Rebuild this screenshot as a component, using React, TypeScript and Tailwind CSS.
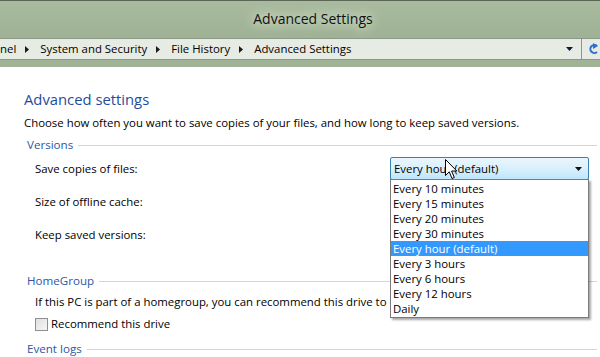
import React from "react";

const intervals = [
  "Every 10 minutes",
  "Every 15 minutes",
  "Every 20 minutes",
  "Every 30 minutes",
  "Every hour (default)",
  "Every 3 hours",
  "Every 6 hours",
  "Every 12 hours",
  "Daily",
];

const crumbs = ["nel", "System and Security", "File History", "Advanced Settings"];

const Chevron = () => (
  <svg width="4" height="7" viewBox="0 0 4 7" className="ml-[9px] mr-[11px] shrink-0">
    <path d="M0 0 L4 3.5 L0 7 Z" fill="#1a1a1a" />
  </svg>
);

const GroupLabel = ({ label }: { label: string }) => (
  <div className="flex items-center h-4 pl-[27px]">
    <span className="text-[#2d57a5] text-[11.6px] leading-4 pr-[5px]">{label}</span>
    <div className="flex-1 h-px bg-[#d6d6d6] mr-[3px]" />
  </div>
);

const Cursor = () => (
  <svg width="13" height="21" viewBox="0 0 13 21" className="absolute left-[445px] top-[159px]">
    <path
      d="M0.5 0.5 L0.5 16.5 L4.3 12.8 L7 19.5 L9.3 18.5 L6.6 12 L11.8 12 Z"
      fill="#fff"
      stroke="#000"
      strokeWidth="1"
      strokeLinejoin="round"
    />
  </svg>
);

export default function App() {
  return (
    <div className="relative w-[600px] h-[357px] overflow-hidden bg-white text-black font-['Open_Sans','Noto_Sans',sans-serif]">
      {/* title bar */}
      <div className="h-[36px] border-t border-[#5b6656] bg-gradient-to-b from-[#a9bb9f] to-[#9fb295] flex items-center justify-center">
        <span className="text-[14px] text-[#111] pl-[26px] [text-shadow:0_0_8px_#dfe9d8,0_0_14px_#dfe9d8]">
          Advanced Settings
        </span>
      </div>

      {/* address bar */}
      <div className="bg-[#a0b396] pt-[2px] pb-[7px]">
        <div className="h-[22px] bg-[#e6ebe3] border-y border-[#8b9886] flex items-center text-[11.4px]">
          {crumbs.map((c, i) => (
            <React.Fragment key={c}>
              {i > 0 && <Chevron />}
              <span>{c}</span>
            </React.Fragment>
          ))}
          <div className="flex-1" />
          <svg width="7" height="4" viewBox="0 0 7 4" className="mr-[8px]">
            <path d="M0 0 H7 L3.5 4 Z" fill="#0d1a45" />
          </svg>
          <div className="w-px h-full bg-[#8b9886]" />
          <svg width="12" height="12" viewBox="0 0 12 12" className="ml-[6px] shrink-0">
            <path d="M9 3 A4 4 0 1 0 9 9" stroke="#2f6fd0" strokeWidth="2" fill="none" />
            <path d="M5 0 L10 3 L5 6 Z" fill="#2f6fd0" />
          </svg>
        </div>
      </div>

      {/* content */}
      <div className="pt-[22px]">
        <h1 className="pl-[24px] h-5 leading-5 text-[14.8px] text-[#1f4d9c] font-normal">Advanced settings</h1>
        <p className="pl-[24px] mt-[6px] h-4 leading-4 text-[11.4px]">
          Choose how often you want to save copies of your files, and how long to keep saved versions.
        </p>

        <div className="mt-[6px]">
          <GroupLabel label="Versions" />
        </div>

        <div className="mt-[4px] h-[23px] flex items-center text-[11.4px]">
          <span className="pl-[35px] w-[390px]">Save copies of files:</span>
          <div className="w-[199px] h-[23px] border border-[#3c7fb1] rounded-[2px] bg-gradient-to-b from-[#eaf6fd] via-[#d9f0fc] to-[#bee6fd] flex items-center pl-[3px] pr-[6px]">
            <span className="flex-1">Every hour (default)</span>
            <svg width="7" height="4" viewBox="0 0 7 4">
              <path d="M0 0 H7 L3.5 4 Z" fill="#111" />
            </svg>
          </div>
        </div>

        <div className="mt-[14px] h-4 leading-4 pl-[35px] text-[11.4px]">Size of offline cache:</div>
        <div className="mt-[17px] h-4 leading-4 pl-[35px] text-[11.4px]">Keep saved versions:</div>

        <div className="mt-[30px]">
          <GroupLabel label="HomeGroup" />
        </div>
        <div className="mt-[5px] h-4 leading-4 pl-[35px] w-[390px] overflow-hidden text-[11.4px] whitespace-nowrap">
          If this PC is part of a homegroup, you can recommend this drive to other homegroup members.
        </div>
        <div className="mt-[6px] h-4 flex items-center pl-[35px] text-[11.4px]">
          <div className="w-[13px] h-[13px] border border-[#8e8f8f] bg-gradient-to-br from-[#e0e0e0] to-[#f6f6f6] mr-[3px]" />
          <span>Recommend this drive</span>
        </div>
        <div className="mt-[9px]">
          <GroupLabel label="Event logs" />
        </div>
      </div>

      {/* open list */}
      <div className="absolute left-[390px] top-[179px] w-[199px] bg-white border border-[#7a7a7a] shadow-[2px_2px_2px_rgba(0,0,0,0.35)] py-[1px] text-[11.4px]">
        {intervals.map((t) => (
          <div
            key={t}
            className={`h-[15px] leading-[15px] pl-[2px] ${t === "Every hour (default)" ? "bg-[#3399ff] text-white" : ""}`}
          >
            {t}
          </div>
        ))}
      </div>

      <Cursor />
    </div>
  );
}
